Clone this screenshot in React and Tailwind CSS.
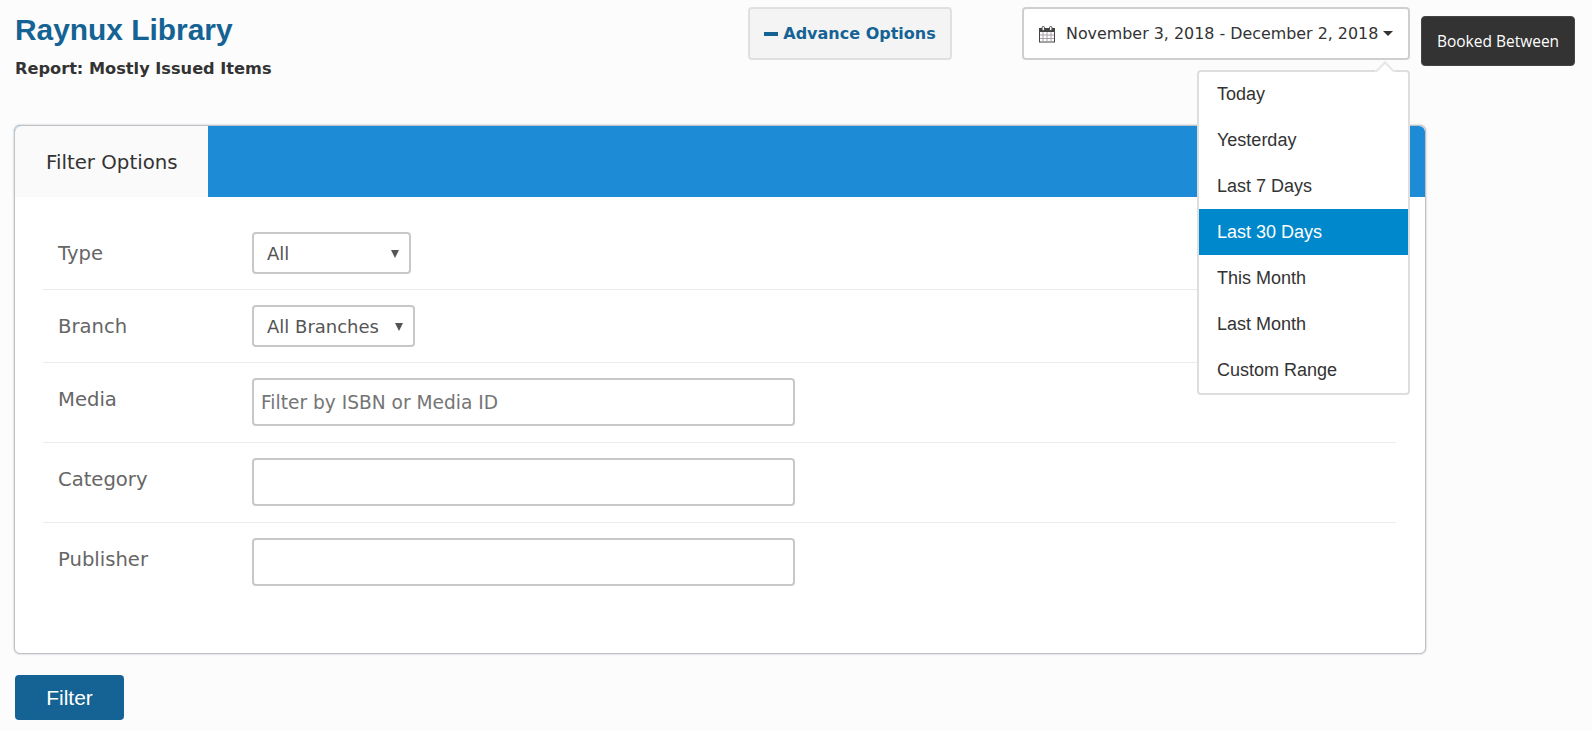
import { useState } from 'react'

const ranges = ['Today', 'Yesterday', 'Last 7 Days', 'Last 30 Days', 'This Month', 'Last Month', 'Custom Range']

function CalendarIcon() {
  return (
    <svg width="18" height="18" viewBox="0 0 18 18" fill="none">
      <rect x="1.5" y="3.5" width="15" height="13.5" fill="#fff" stroke="#444" />
      <rect x="1.5" y="3.5" width="15" height="3" fill="#444" stroke="#444" />
      <path d="M5 7v9.5M9 7v9.5M13 7v9.5M2 10h14M2 13.5h14" stroke="#a9a0a8" />
      <rect x="4" y="1.5" width="2.5" height="4" rx="1.2" fill="#fff" stroke="#444" />
      <rect x="11.5" y="1.5" width="2.5" height="4" rx="1.2" fill="#fff" stroke="#444" />
    </svg>
  )
}

function FilterRow({ label, last, children }) {
  return (
    <div className={`flex items-start pl-[15px] ${last ? '' : 'pb-[15px] mb-[15px] border-b border-[#ececec]'}`}>
      <label className="w-[194px] pt-[9px] text-[19.6px] leading-[26px] text-[#666]">{label}</label>
      {children}
    </div>
  )
}

function SelectBox({ value, width }) {
  return (
    <div className={`${width} h-[42px] flex items-center justify-between pl-[13px] pr-[10px] pt-px bg-white border-2 border-[#c8c8c8] rounded text-[18px] text-[#555]`}>
      <span>{value}</span>
      <span className="w-0 h-0 border-x-[4.5px] border-x-transparent border-t-[8px] border-t-[#555]" />
    </div>
  )
}

function TextBox({ placeholder }) {
  return (
    <input
      className="w-[543px] h-[48px] mb-px px-[7px] pt-px bg-white border-2 border-[#c8c8c8] rounded text-[18.6px] text-[#555] placeholder:text-[#757575] outline-none"
      placeholder={placeholder}
    />
  )
}

export default function App() {
  const [active, setActive] = useState('Last 30 Days')

  return (
    <div className="min-h-[731px] bg-[#fcfcfc] font-['DejaVu_Sans',sans-serif] text-[#333]">
      <div className="flex items-start h-[125px] pl-[15px] pr-[17px] pt-[7px]">
        <div className="flex-1">
          <h1 className="mt-[5px] font-['Liberation_Sans',sans-serif] font-bold text-[29.9px] leading-[36px] text-[#156394]">Raynux Library</h1>
          <p className="mt-[11px] font-bold text-[16.2px] leading-5 text-[#333]">Report: Mostly Issued Items</p>
        </div>
        <button className="w-[204px] h-[53px] flex items-center justify-center gap-[5px] bg-[#f4f4f4] border-2 border-[#e0e0e0] rounded font-bold text-[16px] text-[#156394]">
          <span className="w-[14px] h-[4px] bg-[#156394]" />
          Advance Options
        </button>
        <div className="relative ml-[70px]">
          <button className="w-[388px] h-[53px] flex items-center pl-[14px] gap-[10px] bg-white border-2 border-[#cfcfcf] rounded text-[15.9px] text-[#333] whitespace-nowrap">
            <CalendarIcon />
            <span>November 3, 2018 - December 2, 2018</span>
            <span className="-ml-[5px] w-0 h-0 border-x-[5px] border-x-transparent border-t-[5px] border-t-[#333]" />
          </button>
          <div className="absolute right-0 top-[63px] z-10 w-[213px] bg-white border-2 border-[#dedede] rounded font-['Liberation_Sans',sans-serif] text-[18px]">
            <span className="absolute -top-[8px] right-[16px] w-[14px] h-[14px] rotate-45 bg-white border-l-2 border-t-2 border-[#e6e6e6]" />
            {ranges.map((r, i) => (
              <div
                key={r}
                onClick={() => setActive(r)}
                className={`relative pl-[18px] ${i === 0 ? 'h-[45px] leading-[44px]' : 'h-[46px] leading-[46px]'} ${r === active ? 'bg-[#0088cc] text-white' : 'text-[#333]'}`}
              >
                {r}
              </div>
            ))}
          </div>
        </div>
        <button className="ml-[11px] mt-[9px] w-[154px] h-[50px] pt-[2px] bg-[#333] border border-[#444] rounded text-[15.5px] font-['Open_Sans',sans-serif] text-white">
          Booked Between
        </button>
      </div>

      <div className="mx-[14px] w-[1412px] h-[529px] bg-white rounded-md border border-[#bfc2c7] shadow-[0_0_2px_#a8abb0]">
        <div className="h-[71px] flex bg-[#1e8bd6] rounded-t-md">
          <div className="w-[193px] flex items-center pl-[31px] pt-[3px] bg-[#fafafa] rounded-tl-md text-[19.8px] text-[#333]">Filter Options</div>
        </div>
        <div className="ml-[28px] mr-[29px] pt-[35px]">
          <FilterRow label="Type"><SelectBox value="All" width="w-[159px]" /></FilterRow>
          <FilterRow label="Branch"><SelectBox value="All Branches" width="w-[163px]" /></FilterRow>
          <FilterRow label="Media"><TextBox placeholder="Filter by ISBN or Media ID" /></FilterRow>
          <FilterRow label="Category"><TextBox /></FilterRow>
          <FilterRow label="Publisher" last><TextBox /></FilterRow>
        </div>
      </div>

      <button className="ml-[15px] mt-[21px] w-[109px] h-[45px] bg-[#156394] rounded font-['Liberation_Sans',sans-serif] text-[21px] text-white">Filter</button>
    </div>
  )
}
